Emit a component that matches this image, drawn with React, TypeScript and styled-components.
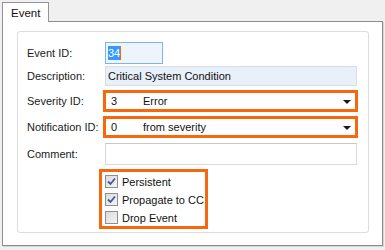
import React from "react"
import styled, { createGlobalStyle } from "styled-components"

const GlobalStyle = createGlobalStyle`
  html, body {
    margin: 0;
    padding: 0;
    background: #f0f0f0;
  }
  body {
    font-family: "Liberation Sans", Arial, sans-serif;
    font-size: 11px;
    color: #1a1a1a;
  }
`

const orange = "#f7680d"

const Window = styled.div`
  width: 385px;
  height: 250px;
  background: #f0f0f0;
  padding: 2px 2px 0 2px;
  box-sizing: border-box;
  display: flex;
  flex-direction: column;
`

const TabStrip = styled.div`
  display: flex;
  height: 19px;
  position: relative;
  z-index: 1;
`

const Tab = styled.div`
  height: 20px;
  padding: 0 8px 0 8px;
  display: flex;
  align-items: center;
  background: #ffffff;
  border: 1px solid #939393;
  border-bottom: none;
  box-sizing: border-box;
  font-size: 11.5px;
  color: #111;
`

const Panel = styled.div`
  width: 381px;
  height: 225px;
  background: #ffffff;
  border: 1px solid #8c8c8c;
  box-sizing: border-box;
  box-shadow: 1px 1px 0 #d6d6d6;
  padding: 9px 13px 12px 14px;
  display: flex;
`

const GroupBox = styled.div`
  flex: 1;
  border: 1px solid #dcdcdc;
  border-radius: 3px;
  padding: 10px 11px 0 9px;
  display: flex;
  flex-direction: column;
`

const Row = styled.div<{ $h: number; $gap: number }>`
  display: flex;
  align-items: center;
  height: ${(p) => p.$h}px;
  margin-bottom: ${(p) => p.$gap}px;
`

const Label = styled.div`
  width: 78px;
  flex: none;
  white-space: nowrap;
`

const Field = styled.div<{ $w?: number; $bg?: string; $border?: string }>`
  ${(p) => (p.$w ? `width: ${p.$w}px;` : "flex: 1;")}
  height: 100%;
  box-sizing: border-box;
  background: ${(p) => p.$bg || "#ffffff"};
  border: 1px solid ${(p) => p.$border || "#d9d9d9"};
  border-top-color: ${(p) => p.$border || "#c8c8c8"};
  display: flex;
  align-items: center;
  padding-left: 2px;
  white-space: nowrap;
  color: #111;
`

const Selected = styled.span`
  background: #3399ff;
  color: #ffffff;
  padding: 1px 0;
  border-right: 1px solid ${orange};
`

const Combo = styled.div`
  flex: 1;
  height: 100%;
  margin-left: -2px;
  margin-right: -1px;
  box-sizing: border-box;
  border: 3px solid ${orange};
  background: #ffffff;
  display: flex;
  align-items: center;
  padding: 0 4px 0 5px;
  color: #111;
`

const ComboId = styled.span`
  width: 32px;
`

const ComboText = styled.span`
  flex: 1;
`

const Arrow = styled.span`
  width: 0;
  height: 0;
  border-left: 4px solid transparent;
  border-right: 4px solid transparent;
  border-top: 4px solid #1a1a1a;
  margin-top: 1px;
`

const CheckGroup = styled.div`
  margin-left: 72px;
  width: 109px;
  height: 60px;
  box-sizing: border-box;
  border: 3px solid ${orange};
  padding: 3px 0 0 3px;
  display: flex;
  flex-direction: column;
  gap: 5px;
`

const CheckRow = styled.div`
  display: flex;
  align-items: center;
  height: 13px;
  gap: 4px;
  white-space: nowrap;
  font-size: 11px;
  color: #111;
`

const Box = styled.span`
  width: 13px;
  height: 13px;
  box-sizing: border-box;
  border: 1px solid #8e8f8f;
  background: linear-gradient(135deg, #dcdcdc 0%, #f4f4f4 100%);
  display: flex;
  align-items: center;
  justify-content: center;
  flex: none;
`

const Check = ({ checked, label }: { checked: boolean; label: string }) => (
  <CheckRow>
    <Box>
      {checked && (
        <svg width="9" height="9" viewBox="0 0 9 9">
          <path d="M1 4.5 L3.5 7 L8 1.5" fill="none" stroke="#3e5a9c" strokeWidth="1.8" />
        </svg>
      )}
    </Box>
    {label}
  </CheckRow>
)

export default function App() {
  return (
    <>
      <GlobalStyle />
      <Window>
        <TabStrip>
          <Tab>Event</Tab>
        </TabStrip>
        <Panel>
          <GroupBox>
            <Row $h={22} $gap={2}>
              <Label>Event ID:</Label>
              <Field $w={58} $bg="#eef4fc" $border="#7eb4ea">
                <Selected>34</Selected>
              </Field>
            </Row>
            <Row $h={20} $gap={4}>
              <Label>Description:</Label>
              <Field $bg="#e8f0fa" $border="#d4dde8">
                Critical System Condition
              </Field>
            </Row>
            <Row $h={22} $gap={4}>
              <Label>Severity ID:</Label>
              <Combo>
                <ComboId>3</ComboId>
                <ComboText>Error</ComboText>
                <Arrow />
              </Combo>
            </Row>
            <Row $h={22} $gap={5}>
              <Label>Notification ID:</Label>
              <Combo>
                <ComboId>0</ComboId>
                <ComboText>from severity</ComboText>
                <Arrow />
              </Combo>
            </Row>
            <Row $h={22} $gap={4}>
              <Label>Comment:</Label>
              <Field />
            </Row>
            <CheckGroup>
              <Check checked label="Persistent" />
              <Check checked label="Propagate to CC" />
              <Check checked={false} label="Drop Event" />
            </CheckGroup>
          </GroupBox>
        </Panel>
      </Window>
    </>
  )
}
